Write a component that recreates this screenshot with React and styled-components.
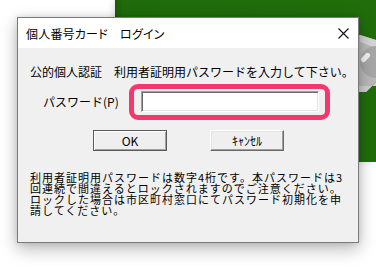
import React from "react";
import styled, { createGlobalStyle } from "styled-components";

const GlobalStyle = createGlobalStyle`
  html, body {
    margin: 0;
    padding: 0;
    background: #ffffff;
    overflow: hidden;
  }
  body {
    font-family: "Noto Sans CJK JP", "Noto Sans", sans-serif;
    color: #000;
  }
`;

const Stage = styled.div`
  position: relative;
  width: 376px;
  height: 268px;
  overflow: hidden;
  padding: 17px 0 0 17px;
  box-sizing: border-box;
  background: #ffffff;
`;

const Desktop = styled.div`
  position: absolute;
  left: 115px;
  top: 0;
  width: 261px;
  height: 162px;
  background: linear-gradient(90deg, #175a06 0px, #1f6b0b 8px, #216d0b 100%);
  box-shadow: -2px 0 6px rgba(0, 0, 0, 0.12);
`;

const CardArt = styled.svg`
  position: absolute;
  right: 0;
  top: 26px;
`;

const Dialog = styled.div`
  position: relative;
  width: 342px;
  height: 226px;
  box-sizing: border-box;
  border: 1px solid #7a7a7a;
  background: #f0f0f0;
  box-shadow: 0 6px 16px rgba(0, 0, 0, 0.28), 0 0 6px rgba(0, 0, 0, 0.12);
  display: flex;
  flex-direction: column;
`;

const TitleBar = styled.div`
  height: 30px;
  background: #ffffff;
  display: flex;
  align-items: center;
  justify-content: space-between;
  padding: 0 9px 0 8px;
`;

const Title = styled.span`
  font-size: 12px;
  font-feature-settings: "palt";
  letter-spacing: 0.2px;
`;

const Body = styled.div`
  flex: 1;
  padding: 18px 0 0 12px;
  display: flex;
  flex-direction: column;
  font-size: 12px;
`;

const Lead = styled.div`
  line-height: 12px;
  white-space: nowrap;
`;

const PasswordRow = styled.div`
  display: flex;
  align-items: center;
  margin-top: 6px;
  padding-left: 13px;
`;

const Label = styled.span`
  width: 86px;
  line-height: 12px;
`;

const Highlight = styled.div`
  width: 201px;
  height: 36px;
  box-sizing: border-box;
  border: 5px solid #f2386c;
  border-radius: 9px;
  padding: 2px 6px 0 7px;
`;

const Field = styled.input`
  width: 178px;
  height: 21px;
  box-sizing: border-box;
  margin: 0;
  padding: 0 3px;
  background: #ffffff;
  border: 1px solid;
  border-color: #a0a0a0 #ffffff #ffffff #a0a0a0;
  box-shadow: inset 1px 1px 0 #696969, inset -1px -1px 0 #e3e3e3;
  outline: none;
  font: inherit;
`;

const Buttons = styled.div`
  display: flex;
  gap: 43px;
  margin-top: 10px;
  padding-left: 63px;
`;

const Button = styled.button`
  width: 74px;
  height: 21px;
  box-sizing: border-box;
  margin: 0;
  padding: 0;
  background: #efefef;
  font-family: "Noto Sans CJK JP", sans-serif;
  font-size: 12px;
  line-height: 12px;
  color: #000;
  border: 1px solid;
  border-color: ${(p) =>
    p.$default ? "#5a5a5a" : "#ffffff #696969 #696969 #ffffff"};
  box-shadow: ${(p) =>
    p.$default
      ? "inset 1px 1px 0 #ffffff, inset -1px -1px 0 #a0a0a0"
      : "inset -1px -1px 0 #a0a0a0, inset 1px 1px 0 #e3e3e3"};
`;

const Note = styled.p`
  margin: 21px 0 0;
  font-size: 11px;
  letter-spacing: 1px;
  line-height: 11px;
  white-space: nowrap;
`;

const CloseIcon = () => (
  <svg width="11" height="11" viewBox="0 0 11 11">
    <path d="M0.5 0.5 L10.5 10.5 M10.5 0.5 L0.5 10.5" stroke="#111" strokeWidth="1.1" fill="none" />
  </svg>
);

export default function App() {
  return (
    <>
      <GlobalStyle />
      <Stage>
        <Desktop>
          <CardArt width="30" height="70" viewBox="0 0 30 70">
            <polygon points="4,6 30,14 30,56 20,66 4,66" fill="#b9b9b9" />
            <polygon points="14,9 30,14 30,22 14,16" fill="#d4d4d4" />
            <circle cx="30" cy="36" r="16" fill="#a7a7a7" />
            <rect x="17" y="26" width="5" height="11" rx="2.5" fill="#f2f2f2" transform="rotate(45 19.5 31.5)" />
            <polygon points="4,60 30,60 30,56 20,66 4,66" fill="#cfcfcf" />
          </CardArt>
        </Desktop>
        <Dialog>
          <TitleBar>
            <Title>個人番号カード　ログイン</Title>
            <CloseIcon />
          </TitleBar>
          <Body>
            <Lead>公的個人認証　利用者証明用パスワードを入力して下さい。</Lead>
            <PasswordRow>
              <Label>パスワード(P)</Label>
              <Highlight>
                <Field type="password" />
              </Highlight>
            </PasswordRow>
            <Buttons>
              <Button $default>OK</Button>
              <Button>ｷｬﾝｾﾙ</Button>
            </Buttons>
            <Note>
              利用者証明用パスワードは数字4桁です。本パスワードは3
              <br />
              回連続で間違えるとロックされますのでご注意ください。
              <br />
              ロックした場合は市区町村窓口にてパスワード初期化を申
              <br />
              請してください。
            </Note>
          </Body>
        </Dialog>
      </Stage>
    </>
  );
}
